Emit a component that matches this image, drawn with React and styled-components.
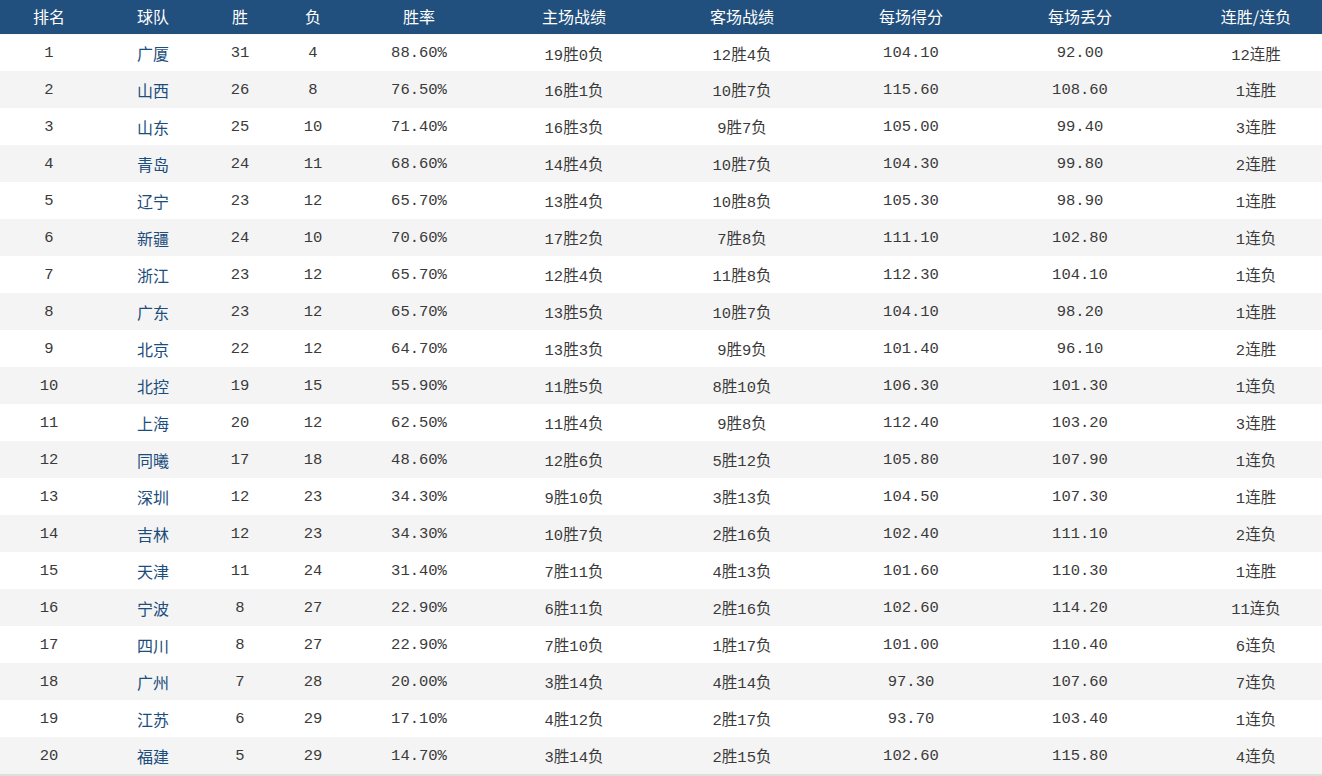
import React from "react";
import styled, { createGlobalStyle } from "styled-components";

const Global = createGlobalStyle`
  html, body { margin: 0; padding: 0; background: #fff; overflow: hidden; }
  body { font-family: "Liberation Mono", "Noto Sans CJK SC", monospace; }
`;

const COLS = "98px 110px 64px 82px 130px 180px 156px 182px 156px 196px";

const Table = styled.div`
  width: 1354px;
  border-bottom: 2px solid #dedede;
`;

const HeaderRow = styled.div`
  display: grid;
  grid-template-columns: ${COLS};
  height: 34px;
  background: #22507e;
`;

const HeaderCell = styled.div`
  display: flex;
  align-items: center;
  justify-content: center;
  color: #fff;
  font-family: "Noto Sans CJK SC", sans-serif;
  font-size: 16px;
  padding-bottom: 3px;
`;

const Row = styled.div`
  display: grid;
  grid-template-columns: ${COLS};
  height: 37px;
  background: ${(p) => (p.$alt ? "#f4f4f4" : "#ffffff")};
  border-top: ${(p) => (p.$first ? "1px solid #fdf6ea" : "none")};
  box-sizing: border-box;
`;

const Cell = styled.div`
  display: flex;
  align-items: center;
  justify-content: center;
  color: ${(p) => (p.$team ? "#1b4d7d" : "#3a3a3a")};
  font-family: ${(p) =>
    p.$team ? `"Noto Sans CJK SC", sans-serif` : `"Liberation Mono", "Noto Sans CJK SC", monospace`};
  font-size: ${(p) => (p.$team ? "16px" : "15.5px")};
  white-space: nowrap;
`;

const headers = ["排名", "球队", "胜", "负", "胜率", "主场战绩", "客场战绩", "每场得分", "每场丢分", "连胜/连负"];

const data = [
  ["广厦", 31, 4, "88.60%", "19胜0负", "12胜4负", "104.10", "92.00", "12连胜"],
  ["山西", 26, 8, "76.50%", "16胜1负", "10胜7负", "115.60", "108.60", "1连胜"],
  ["山东", 25, 10, "71.40%", "16胜3负", "9胜7负", "105.00", "99.40", "3连胜"],
  ["青岛", 24, 11, "68.60%", "14胜4负", "10胜7负", "104.30", "99.80", "2连胜"],
  ["辽宁", 23, 12, "65.70%", "13胜4负", "10胜8负", "105.30", "98.90", "1连胜"],
  ["新疆", 24, 10, "70.60%", "17胜2负", "7胜8负", "111.10", "102.80", "1连负"],
  ["浙江", 23, 12, "65.70%", "12胜4负", "11胜8负", "112.30", "104.10", "1连负"],
  ["广东", 23, 12, "65.70%", "13胜5负", "10胜7负", "104.10", "98.20", "1连胜"],
  ["北京", 22, 12, "64.70%", "13胜3负", "9胜9负", "101.40", "96.10", "2连胜"],
  ["北控", 19, 15, "55.90%", "11胜5负", "8胜10负", "106.30", "101.30", "1连负"],
  ["上海", 20, 12, "62.50%", "11胜4负", "9胜8负", "112.40", "103.20", "3连胜"],
  ["同曦", 17, 18, "48.60%", "12胜6负", "5胜12负", "105.80", "107.90", "1连负"],
  ["深圳", 12, 23, "34.30%", "9胜10负", "3胜13负", "104.50", "107.30", "1连胜"],
  ["吉林", 12, 23, "34.30%", "10胜7负", "2胜16负", "102.40", "111.10", "2连负"],
  ["天津", 11, 24, "31.40%", "7胜11负", "4胜13负", "101.60", "110.30", "1连胜"],
  ["宁波", 8, 27, "22.90%", "6胜11负", "2胜16负", "102.60", "114.20", "11连负"],
  ["四川", 8, 27, "22.90%", "7胜10负", "1胜17负", "101.00", "110.40", "6连负"],
  ["广州", 7, 28, "20.00%", "3胜14负", "4胜14负", "97.30", "107.60", "7连负"],
  ["江苏", 6, 29, "17.10%", "4胜12负", "2胜17负", "93.70", "103.40", "1连负"],
  ["福建", 5, 29, "14.70%", "3胜14负", "2胜15负", "102.60", "115.80", "4连负"],
];

export default function App() {
  return (
    <>
      <Global />
      <Table>
        <HeaderRow>
          {headers.map((h) => (
            <HeaderCell key={h}>{h}</HeaderCell>
          ))}
        </HeaderRow>
        {data.map((r, i) => (
          <Row key={i} $alt={i % 2 === 1} $first={i === 0}>
            <Cell>{i + 1}</Cell>
            <Cell $team>{r[0]}</Cell>
            {r.slice(1).map((v, j) => (
              <Cell key={j}>{v}</Cell>
            ))}
          </Row>
        ))}
      </Table>
    </>
  );
}
